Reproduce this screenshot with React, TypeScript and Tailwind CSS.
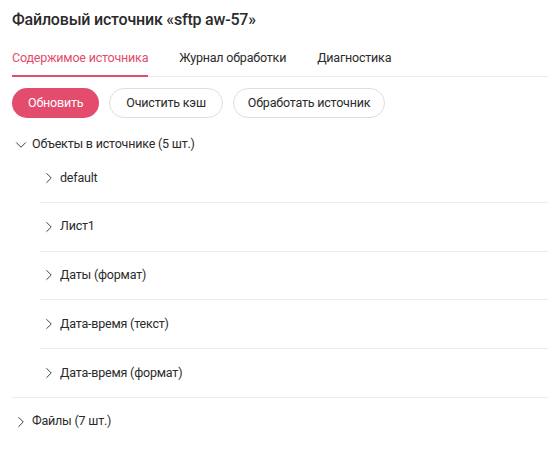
import { ChevronDown, ChevronRight } from 'lucide-react';

const objects = ['default', 'Лист1', 'Даты (формат)', 'Дата-время (текст)', 'Дата-время (формат)'];

export default function App() {
    return (
        <div className="min-h-screen bg-white px-3 pt-[9px] font-['Roboto',sans-serif] text-[#2b2b2b]">
            {/* Header */}
            <h1 className="text-[16px] font-medium leading-[22px] tracking-[-0.2px]">
                Файловый источник «sftp aw-57»
            </h1>

            {/* Tabs */}
            <div className="mt-[18px] flex gap-[31px] border-b border-[#ececec] text-[12.5px] tracking-[-0.2px]">
                <button type="button" className="relative pb-[9px] leading-[18px] text-[#e34c6c]">
                    Содержимое источника
                    <span className="absolute -bottom-px left-0 right-0 h-[2px] bg-[#e34c6c]" />
                </button>
                <button type="button" className="pb-[9px] leading-[18px]">Журнал обработки</button>
                <button type="button" className="pb-[9px] leading-[18px]">Диагностика</button>
            </div>

            {/* Actions */}
            <div className="mt-[11px] flex gap-[10px] text-[12.5px] tracking-[-0.2px]">
                <button type="button" className="h-[30px] rounded-full bg-[#e34c6c] px-4 text-white">
                    Обновить
                </button>
                <button type="button" className="h-[30px] rounded-full border border-[#dedede] px-4">
                    Очистить кэш
                </button>
                <button type="button" className="h-[30px] rounded-full border border-[#dedede] px-[14px]">
                    Обработать источник
                </button>
            </div>

            {/* Tree */}
            <div className="mt-[17px] border-b border-[#ececec] text-[12.5px] tracking-[-0.2px]">
                <div className="flex h-[19px] items-center gap-[2px]">
                    <ChevronDown className="h-[18px] w-[18px]" strokeWidth={1.2} />
                    <span>Объекты в источнике (5 шт.)</span>
                </div>
                <div className="pl-[28px]">
                    {objects.map((name, i) => (
                        <div
                            key={name}
                            className={
                                i < objects.length - 1
                                    ? 'flex h-[48.75px] items-center gap-[2px] border-b border-[#ececec]'
                                    : 'flex h-[47.75px] items-center gap-[2px]'
                            }
                        >
                            <ChevronRight className="h-[18px] w-[18px]" strokeWidth={1.2} />
                            <span>{name}</span>
                        </div>
                    ))}
                </div>
            </div>
            <div className="flex h-12 items-center gap-[2px] text-[12.5px] tracking-[-0.2px]">
                <ChevronRight className="h-[18px] w-[18px]" strokeWidth={1.2} />
                <span>Файлы (7 шт.)</span>
            </div>
        </div>
    );
}
